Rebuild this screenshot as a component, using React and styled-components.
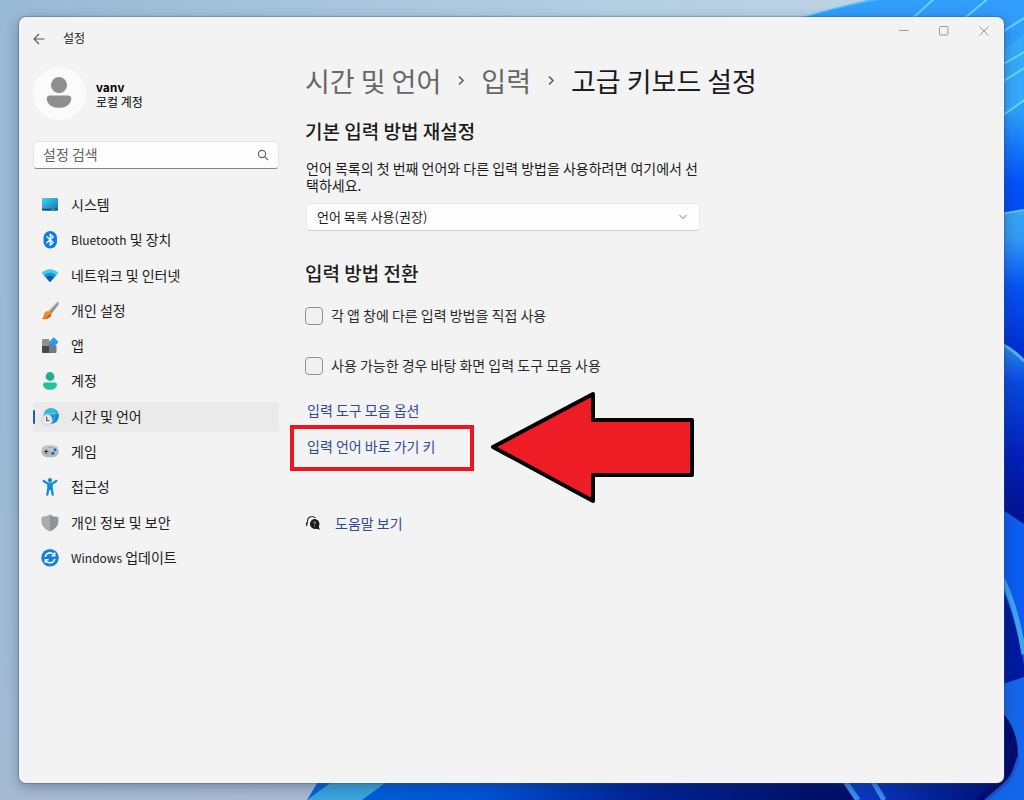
import React from 'react';
import styled, { createGlobalStyle } from 'styled-components';

const GlobalStyle = createGlobalStyle`
  *, *::before, *::after { box-sizing: border-box; }
  body { margin: 0; background: #a5c0da; }
  body, button, input, select {
    font-family: "Noto Sans CJK KR", "Noto Sans", sans-serif;
  }
`;

const Desktop = styled.div`
  position: relative;
  display: flex;
  min-height: 100vh;
  padding: 17px 20px 17px 19px;
`;

const WallpaperSvg = styled.svg`
  position: absolute;
  inset: 0;
  width: 100%;
  height: 100%;
`;

const Window = styled.div`
  position: relative;
  flex: 1;
  min-width: 0;
  background: #f3f3f3;
  border-radius: 7px;
  box-shadow: 0 0 1px 1px rgba(60, 80, 110, 0.35), 0 4px 14px rgba(20, 40, 70, 0.35);
  color: #1b1b1b;
`;

const TitleBar = styled.header`
  display: flex;
  justify-content: space-between;
  height: 43px;
`;

const TitleGroup = styled.div`
  display: flex;
  align-items: center;
  gap: 12px;
  padding-left: 8px;
  font-size: 12px;
`;

const IconButton = styled.button`
  display: flex;
  align-items: center;
  justify-content: center;
  width: ${(p) => p.$width}px;
  height: 28px;
  padding: 0;
  border: 0;
  background: none;
  color: ${(p) => p.$color};
`;

const WindowControls = styled.div`
  display: flex;
`;

const Body = styled.div`
  display: flex;
  gap: 26px;
  padding: 0 14px;
`;

const Sidebar = styled.aside`
  flex: 0 0 246px;
  padding-top: 7px;
`;

const Profile = styled.div`
  display: flex;
  align-items: center;
  gap: 10px;
`;

const Avatar = styled.svg`
  width: 53px;
  height: 53px;
`;

const ProfileText = styled.div`
  font-size: 12px;
  line-height: 15px;
  color: #000;
`;

const SearchBox = styled.div`
  display: flex;
  align-items: center;
  height: 28px;
  margin-top: 21px;
  padding: 0 9px;
  background: #fdfdfd;
  border: 1px solid #e5e5e5;
  border-bottom-color: #868686;
  border-radius: 4px;
`;

const SearchInput = styled.input`
  flex: 1;
  min-width: 0;
  padding: 0 0 2px;
  border: 0;
  outline: 0;
  background: none;
  font-size: 14px;
  &::placeholder { color: #616161; opacity: 1; }
`;

const NavList = styled.ul`
  display: flex;
  flex-direction: column;
  justify-content: space-between;
  height: 383px;
  margin: 21px 0 0;
  padding: 0;
  list-style: none;
`;

const NavLink = styled.a`
  display: flex;
  align-items: center;
  gap: 12px;
  height: 30px;
  padding-left: 8px;
  border-radius: 4px;
  font-size: 14px;
  color: #202020;
  text-decoration: none;
  position: relative;
  background: ${(p) => (p.$active ? '#eaeaea' : 'transparent')};
  &::before {
    content: "";
    display: ${(p) => (p.$active ? 'block' : 'none')};
    position: absolute;
    left: 0;
    top: 8px;
    width: 2px;
    height: 14px;
    border-radius: 1px;
    background: #1560bd;
  }
  svg { width: 18px; height: 18px; flex: none; }
`;

const Label = styled.span`
  padding-bottom: 2px;
`;

const Latin = styled.span`
  font-size: 12px;
`;

const Main = styled.main`
  flex: 1;
  min-width: 0;
`;

const Breadcrumb = styled.nav`
  display: flex;
  align-items: center;
  gap: 16px;
  height: 40px;
  font-size: 27px;
  color: #1b1b1b;
`;

const CrumbLink = styled.a`
  color: #666;
  text-decoration: none;
`;

const PageTitle = styled.h1`
  margin: 0;
  font-size: 27px;
  font-weight: 400;
`;

const SectionTitle = styled.h2`
  margin: ${(p) => p.$top}px 0 0;
  font-size: 19px;
  line-height: 28px;
  font-weight: 500;
`;

const Description = styled.label`
  display: block;
  max-width: 395px;
  margin-top: 15px;
  padding-left: 1px;
  font-size: 14px;
  line-height: 17px;
`;

const SelectWrap = styled.div`
  position: relative;
  max-width: 394px;
  margin: 9px 0 0 1px;
`;

const Select = styled.select`
  appearance: none;
  display: block;
  width: 100%;
  height: 28px;
  padding: 0 32px 2px 10px;
  border: 1px solid #e8e8e8;
  border-bottom-color: #cfcfcf;
  border-radius: 4px;
  background: #fdfdfd;
  color: #1b1b1b;
  font-size: 13px;
`;

const SelectArrow = styled.svg`
  position: absolute;
  right: 12px;
  top: 10px;
  pointer-events: none;
`;

const CheckRow = styled.label`
  display: flex;
  align-items: center;
  gap: 8px;
  height: 20px;
  margin-top: ${(p) => p.$top}px;
  font-size: 14px;
  color: #2b2b2b;
`;

const CheckBox = styled.input`
  appearance: none;
  width: 18px;
  height: 18px;
  margin: 0;
  border: 1px solid #929292;
  border-radius: 4px;
  background: #f0f0f0;
`;

const LinkList = styled.div`
  display: flex;
  flex-direction: column;
  align-items: flex-start;
  gap: 16px;
  margin-top: 24px;
  padding-left: 2px;
`;

const TextLink = styled.a`
  font-size: 14px;
  line-height: 20px;
  color: #2f4a95;
  text-decoration: none;
`;

const Highlighted = styled.div`
  position: relative;
  display: flex;
`;

const HighlightBox = styled.div`
  position: absolute;
  left: -17px;
  top: -11px;
  width: 184px;
  height: 46px;
  border: 4px solid #ec1620;
  pointer-events: none;
`;

const Arrow = styled.svg`
  position: absolute;
  left: 181px;
  top: -47px;
  width: 210px;
  height: 116px;
  pointer-events: none;
`;

const HelpRow = styled.div`
  display: flex;
  align-items: center;
  gap: 14px;
  margin-top: 57px;
`;

function Wallpaper() {
  return (
    <WallpaperSvg viewBox="0 0 1024 800" preserveAspectRatio="none" aria-hidden="true">
      <defs>
        <linearGradient id="sky" x1="0" y1="0" x2="1" y2="0">
          <stop offset="0" stopColor="#98b9d5" />
          <stop offset="0.6" stopColor="#b5cfe3" />
          <stop offset="1" stopColor="#bfd5e4" />
        </linearGradient>
        <linearGradient id="skyLow" x1="0" y1="0" x2="0" y2="1">
          <stop offset="0" stopColor="#a5bdd6" stopOpacity="0" />
          <stop offset="1" stopColor="#a6bbd3" />
        </linearGradient>
        <linearGradient id="petalA" x1="0" y1="0" x2="0" y2="1">
          <stop offset="0" stopColor="#329dfb" />
          <stop offset="0.5" stopColor="#2f9dfb" />
          <stop offset="0.65" stopColor="#1478fb" />
          <stop offset="0.8" stopColor="#0352f8" />
          <stop offset="1" stopColor="#0345ee" />
        </linearGradient>
        <linearGradient id="petalB" x1="0" y1="0" x2="0" y2="1">
          <stop offset="0" stopColor="#3aa6f2" />
          <stop offset="0.2" stopColor="#2f96f4" />
          <stop offset="0.5" stopColor="#0555f2" />
          <stop offset="1" stopColor="#0226cc" />
        </linearGradient>
        <linearGradient id="petalC" x1="0" y1="0" x2="0" y2="1">
          <stop offset="0" stopColor="#2d8fe8" />
          <stop offset="0.2" stopColor="#0a4ae0" />
          <stop offset="0.6" stopColor="#0220b8" />
          <stop offset="1" stopColor="#01108c" />
        </linearGradient>
        <linearGradient id="floor" x1="0" y1="0" x2="1" y2="0">
          <stop offset="0" stopColor="#0064de" />
          <stop offset="0.25" stopColor="#0053d6" />
          <stop offset="0.45" stopColor="#00269a" />
          <stop offset="0.7" stopColor="#00106c" />
          <stop offset="1" stopColor="#000a60" />
        </linearGradient>
        <linearGradient id="stem" x1="0" y1="0" x2="1" y2="0">
          <stop offset="0" stopColor="#0a3fd0" />
          <stop offset="1" stopColor="#000f78" />
        </linearGradient>
      </defs>
      <rect width="1024" height="800" fill="url(#sky)" />
      <rect y="300" width="1024" height="500" fill="url(#skyLow)" />
      <path d="M780 24 Q850 2 900 -6 H1024 V230 H960 V30 H780Z" fill="url(#petalA)" />
      <path d="M1000 52 L1024 34 V102 L1000 116Z" fill="#3ab0f8" opacity=".55" />
      <g fill="none" stroke="#62d5fb" strokeWidth="2">
        <path d="M784 22 Q850 3 892 -3" opacity=".5" />
        <path d="M914 17 L936 -3" />
        <path d="M966 17 L990 -3" />
        <path d="M1002 32 L1026 17" />
        <path d="M1002 65 L1026 51" />
        <path d="M1002 82 L1026 67" />
        <path d="M1002 116 L1026 99" />
      </g>
      <path d="M1000 214 L1024 210 V362 H1000Z" fill="url(#petalB)" />
      <path d="M1000 214 L1024 210" stroke="#55c3f5" strokeWidth="2" />
      <path d="M1000 343 Q1014 350 1024 361 V530 H1000Z" fill="url(#petalC)" />
      <path d="M1000 343 Q1014 350 1024 361" fill="none" stroke="#4fb7f0" strokeWidth="3" />
      <path d="M1000 508 L1024 524 V680 H1000Z" fill="#0b5cf0" />
      <path d="M1000 585 Q1014 610 1024 665 V690 H1000Z" fill="#001a9e" />
      <path d="M1002 578 Q1016 606 1024 654" fill="none" stroke="#3fa5ea" strokeWidth="5" />
      <path d="M325 770 H1024 V800 H307Z" fill="url(#floor)" />
      <path d="M337 778 L307 800 H362 L392 778Z" fill="#3ba5dd" />
      <path d="M842 780 H1000 V800 H854Z" fill="url(#stem)" />
      <path d="M844 780 L858 800 M872 780 L884 800" stroke="#3b8cf0" strokeWidth="5" />
      <path d="M1000 685 L1024 677 V800 H985 L1004 783Z" fill="#1467ea" />
      <path d="M1000 710 Q1018 728 1018 755 Q1016 778 986 800 H975 L1000 780Z" fill="#000c70" />
      <path d="M984 802 L1006 783 Q1014 776 1018 758" fill="none" stroke="#1d53cd" strokeWidth="3" />
    </WallpaperSvg>
  );
}

const icons = {
  system: (
    <svg viewBox="0 0 18 18" aria-hidden="true">
      <defs>
        <linearGradient id="sys" x1="0" y1="0" x2="1" y2="1">
          <stop offset="0" stopColor="#43d3ef" />
          <stop offset="1" stopColor="#0c73b4" />
        </linearGradient>
      </defs>
      <rect x="1" y="2" width="16" height="12.5" rx="1" fill="url(#sys)" />
      <path d="M1 12.8h16v.7a1 1 0 0 1-1 1H2a1 1 0 0 1-1-1z" fill="#0d4f79" />
      <path d="M10 13.5h4" stroke="#e2a85c" strokeWidth=".5" />
    </svg>
  ),
  bluetooth: (
    <svg viewBox="0 0 18 18" aria-hidden="true">
      <rect x="2.500" y="0" width="13.500" height="17.500" rx="6.700" fill="#0a7bf2" />
      <path d="M5.800 5.800l6.400 5.700-3 2.800V3.200l3 2.800-6.400 5.700" fill="none" stroke="#fff" strokeWidth="1.300" strokeLinejoin="round" strokeLinecap="round" />
    </svg>
  ),
  network: (
    <svg viewBox="0 0 18 18" aria-hidden="true">
      <path d="M.5 6Q9-1.500 17.500 6L9 15Z" fill="#4bc8f3" />
      <path d="M2.800 8.300Q9 2.500 15.200 8.300L9 15Z" fill="#1b92df" />
      <path d="M5 10.600Q9 6.500 13 10.600L9 15Z" fill="#0b5cae" />
    </svg>
  ),
  personal: (
    <svg viewBox="0 0 18 18" aria-hidden="true">
      <path d="M17.400.5c.7.7.3 1.700-.3 2.600l-6.600 8.600-3-2.700L15 1.200c.8-.8 1.700-1.300 2.400-.7z" fill="#8c8c8c" />
      <path d="M17.400.5L8.500 10l-1-1L15 1.200c.8-.8 1.700-1.300 2.400-.7z" fill="#b9b9b9" />
      <path d="M7 9c2 .2 3.400 1.400 3.500 3.300C10.200 16 5 18 .5 16.800c1.800-.6 1.900-2.100 2.400-4C3.500 10.500 5 9 7 9z" fill="#f28a1e" />
      <path d="M10.300 12.800C9.600 16.200 4.800 17.900.5 16.800c3 .2 6-1.300 7-4z" fill="#dd5c14" />
    </svg>
  ),
  apps: (
    <svg viewBox="0 0 18 18" aria-hidden="true">
      <path d="M1 3a1 1 0 0 1 1-1h6v7H1z" fill="#8e9194" />
      <path d="M1 9h7v7H2a1 1 0 0 1-1-1z" fill="#43474c" />
      <path d="M8 4l7.500 5v6a1 1 0 0 1-1 1H8z" fill="#777b80" />
      <rect x="9.300" y="1.700" width="6.800" height="6.800" rx=".8" transform="rotate(45 12.700 5.100)" fill="#2d9bea" />
    </svg>
  ),
  account: (
    <svg viewBox="0 0 18 18" aria-hidden="true">
      <circle cx="9" cy="4.500" r="4.400" fill="#1fb18f" />
      <path d="M4 10.500h10a2 2 0 0 1 2 2c0 3.300-3.200 5.300-7 5.300s-7-2-7-5.300a2 2 0 0 1 2-2z" fill="#25c29e" />
    </svg>
  ),
  time: (
    <svg viewBox="0 0 18 18" aria-hidden="true">
      <circle cx="10.200" cy="8" r="7.700" fill="#1488d0" />
      <path d="M10.200.3a7.700 7.700 0 0 0-7.500 6l7.500 1.700 6-3A7.700 7.700 0 0 0 10.200.3z" fill="#2fb9dc" />
      <path d="M10.500.5c4 4 4 11 0 15M3 5.500h14" stroke="#5fdcf0" strokeWidth=".7" fill="none" opacity=".7" />
      <circle cx="5.900" cy="11.800" r="5.400" fill="#e6e7e8" stroke="#bfc6cb" strokeWidth=".6" />
      <path d="M5.700 8.800v3.700h2.500" fill="none" stroke="#4b4b4b" strokeWidth="1.100" />
    </svg>
  ),
  gaming: (
    <svg viewBox="0 0 18 18" aria-hidden="true">
      <rect x=".3" y="2.500" width="17.400" height="11.800" rx="5.900" fill="#b4b9be" />
      <rect x="1" y="2.500" width="16" height="6" rx="3" fill="#c9cdd1" opacity=".7" />
      <path d="M3 8.500h4.400M5.200 6.300v4.400" stroke="#363a40" strokeWidth="1.200" />
      <circle cx="14" cy="6.700" r="1.500" fill="#1666d4" />
      <circle cx="11.800" cy="10.300" r="1.500" fill="#1666d4" />
      <path d="M8 4.500h1M10.500 4.500h1" stroke="#4f7bb8" />
    </svg>
  ),
  access: (
    <svg viewBox="0 0 18 18" aria-hidden="true">
      <circle cx="9" cy="2.200" r="2.100" fill="#1884dd" />
      <path d="M2.700 3l4.100 2.600h4.400L15.300 3M9 6v5M6.300 16.500L7.500 10V6.500M11.700 16.500L10.500 10V6.500" fill="none" stroke="#1288e0" strokeWidth="2.300" strokeLinecap="round" strokeLinejoin="round" />
      <rect x="6.600" y="5" width="4.800" height="6.300" fill="#1288e0" />
    </svg>
  ),
  privacy: (
    <svg viewBox="0 0 18 18" aria-hidden="true">
      <path d="M9 .8c2.300 1.800 5 2.400 8 2.500v4.500c0 4.500-3.600 7.400-8 9.200z" fill="#8f9193" />
      <path d="M9 .8C6.700 2.600 4 3.200 1 3.300v4.500c0 4.500 3.600 7.400 8 9.200z" fill="#a9abad" />
      <path d="M9 .8c2.300 1.800 5 2.400 8 2.500v4.500c0 4.500-3.600 7.400-8 9.200-4.400-1.800-8-4.700-8-9.200V3.300C4 3.200 6.700 2.600 9 .8z" fill="none" stroke="#a3a5a7" />
    </svg>
  ),
  update: (
    <svg viewBox="0 0 18 18" aria-hidden="true">
      <circle cx="9" cy="8.800" r="8.800" fill="#1681da" />
      <path d="M4.200 7.800A5 5 0 0 1 13.200 6M13.800 9.800A5 5 0 0 1 4.800 11.600" fill="none" stroke="#fff" strokeWidth="1.500" />
      <path d="M13.700 3.500v3.300h-3.300M4.300 14.100v-3.300h3.300" fill="none" stroke="#fff" strokeWidth="1.400" />
    </svg>
  ),
};

const navItems = [
  { icon: 'system', label: '시스템' },
  { icon: 'bluetooth', latin: 'Bluetooth', label: ' 및 장치' },
  { icon: 'network', label: '네트워크 및 인터넷' },
  { icon: 'personal', label: '개인 설정' },
  { icon: 'apps', label: '앱' },
  { icon: 'account', label: '계정' },
  { icon: 'time', label: '시간 및 언어' },
  { icon: 'gaming', label: '게임' },
  { icon: 'access', label: '접근성' },
  { icon: 'privacy', label: '개인 정보 및 보안' },
  { icon: 'update', latin: 'Windows', label: ' 업데이트' },
];

function Chevron() {
  return (
    <svg width="8" height="12" viewBox="0 0 8 12" fill="none" stroke="#5c5c5c" strokeWidth="1.600" aria-hidden="true">
      <path d="M2 2.500l4 4-4 4" />
    </svg>
  );
}

export default function App() {
  return (
    <Desktop>
      <GlobalStyle />
      <Wallpaper />
      <Window>
        <TitleBar>
          <TitleGroup>
            <IconButton $width={24} $color="#555" aria-label="뒤로">
              <svg width="12" height="12" viewBox="0 0 12 12" fill="none" stroke="currentColor" strokeWidth="1.100">
                <path d="M6 1L1 6l5 5M1 6h10.500" />
              </svg>
            </IconButton>
            <Label>설정</Label>
          </TitleGroup>
          <WindowControls>
            <IconButton $width={40} $color="#9a9a9a" aria-label="최소화">
              <svg width="10" height="10" viewBox="0 0 10 10" stroke="currentColor">
                <path d="M0 4.500h9.500" />
              </svg>
            </IconButton>
            <IconButton $width={40} $color="#9a9a9a" aria-label="최대화">
              <svg width="10" height="10" viewBox="0 0 10 10" fill="none" stroke="currentColor">
                <rect x=".5" y=".5" width="8.500" height="8.500" rx="1" />
              </svg>
            </IconButton>
            <IconButton $width={40} $color="#9a9a9a" aria-label="닫기">
              <svg width="10" height="10" viewBox="0 0 10 10" stroke="currentColor">
                <path d="M.5.5l9 9M9.500.5l-9 9" />
              </svg>
            </IconButton>
          </WindowControls>
        </TitleBar>
        <Body>
          <Sidebar>
            <Profile>
              <Avatar viewBox="0 0 54 54" aria-hidden="true">
                <circle cx="27" cy="27" r="27" fill="#fbfbfb" />
                <circle cx="26.500" cy="18.500" r="8.200" fill="#8f8f8f" />
                <path d="M17 29h19a3 3 0 0 1 3 3.500c-.6 5.800-5.500 9-12.500 9s-11.900-3.200-12.500-9a3 3 0 0 1 3-3.500z" fill="#8f8f8f" />
              </Avatar>
              <ProfileText>
                <strong>vanv</strong>
                <div>로컬 계정</div>
              </ProfileText>
            </Profile>
            <SearchBox>
              <SearchInput type="text" placeholder="설정 검색" aria-label="설정 검색" />
              <svg width="12" height="12" viewBox="0 0 12 12" fill="none" stroke="#606060" strokeWidth="1.100" aria-hidden="true">
                <circle cx="5" cy="5" r="3.600" />
                <path d="M7.600 7.600L11 11" />
              </svg>
            </SearchBox>
            <nav>
              <NavList>
                {navItems.map(({ icon, latin, label }) => (
                  <li key={icon}>
                    <NavLink href="#" $active={icon === 'time'}>
                      {icons[icon]}
                      <Label>
                        {latin && <Latin>{latin}</Latin>}
                        {label}
                      </Label>
                    </NavLink>
                  </li>
                ))}
              </NavList>
            </nav>
          </Sidebar>
          <Main>
            <Breadcrumb>
              <CrumbLink href="#">시간 및 언어</CrumbLink>
              <Chevron />
              <CrumbLink href="#">입력</CrumbLink>
              <Chevron />
              <PageTitle>고급 키보드 설정</PageTitle>
            </Breadcrumb>
            <SectionTitle $top={17}>기본 입력 방법 재설정</SectionTitle>
            <Description htmlFor="input-method">
              언어 목록의 첫 번째 언어와 다른 입력 방법을 사용하려면 여기에서 선택하세요.
            </Description>
            <SelectWrap>
              <Select id="input-method">
                <option>언어 목록 사용(권장)</option>
              </Select>
              <SelectArrow width="10" height="8" viewBox="0 0 10 8" fill="none" stroke="#777" aria-hidden="true">
                <path d="M1.500 2l3.500 3.500L8.500 2" />
              </SelectArrow>
            </SelectWrap>
            <SectionTitle $top={28}>입력 방법 전환</SectionTitle>
            <CheckRow $top={19}>
              <CheckBox type="checkbox" />
              <Label>각 앱 창에 다른 입력 방법을 직접 사용</Label>
            </CheckRow>
            <CheckRow $top={30}>
              <CheckBox type="checkbox" />
              <Label>사용 가능한 경우 바탕 화면 입력 도구 모음 사용</Label>
            </CheckRow>
            <LinkList>
              <TextLink href="#">입력 도구 모음 옵션</TextLink>
              <Highlighted>
                <TextLink href="#">입력 언어 바로 가기 키</TextLink>
                <HighlightBox />
                <Arrow viewBox="0 0 210 116" aria-hidden="true">
                  <path d="M5 58L105 5v26h99v55h-99v26z" fill="#ee1c25" stroke="#000" strokeWidth="4" strokeLinejoin="round" />
                </Arrow>
              </Highlighted>
            </LinkList>
            <HelpRow>
              <svg width="16" height="16" viewBox="0 0 16 16" aria-hidden="true">
                <path d="M2.500 10.500H1.500V8h1M2.500 9V6a4.500 4.500 0 0 1 8-2.800" fill="none" stroke="#333" strokeWidth="1.100" />
                <path d="M9.500 4a5 5 0 0 1 4.300 7.500l1 3.200-3.200-1A5 5 0 1 1 9.500 4z" fill="#1c1c1c" />
                <path d="M8.300 7.800c.2-1.200 2.500-1.100 2.400.1 0 .8-1.200.9-1.200 1.800M9.500 10.800v.9" fill="none" stroke="#b5b5b5" strokeWidth="1" />
              </svg>
              <TextLink href="#">도움말 보기</TextLink>
            </HelpRow>
          </Main>
        </Body>
      </Window>
    </Desktop>
  );
}
